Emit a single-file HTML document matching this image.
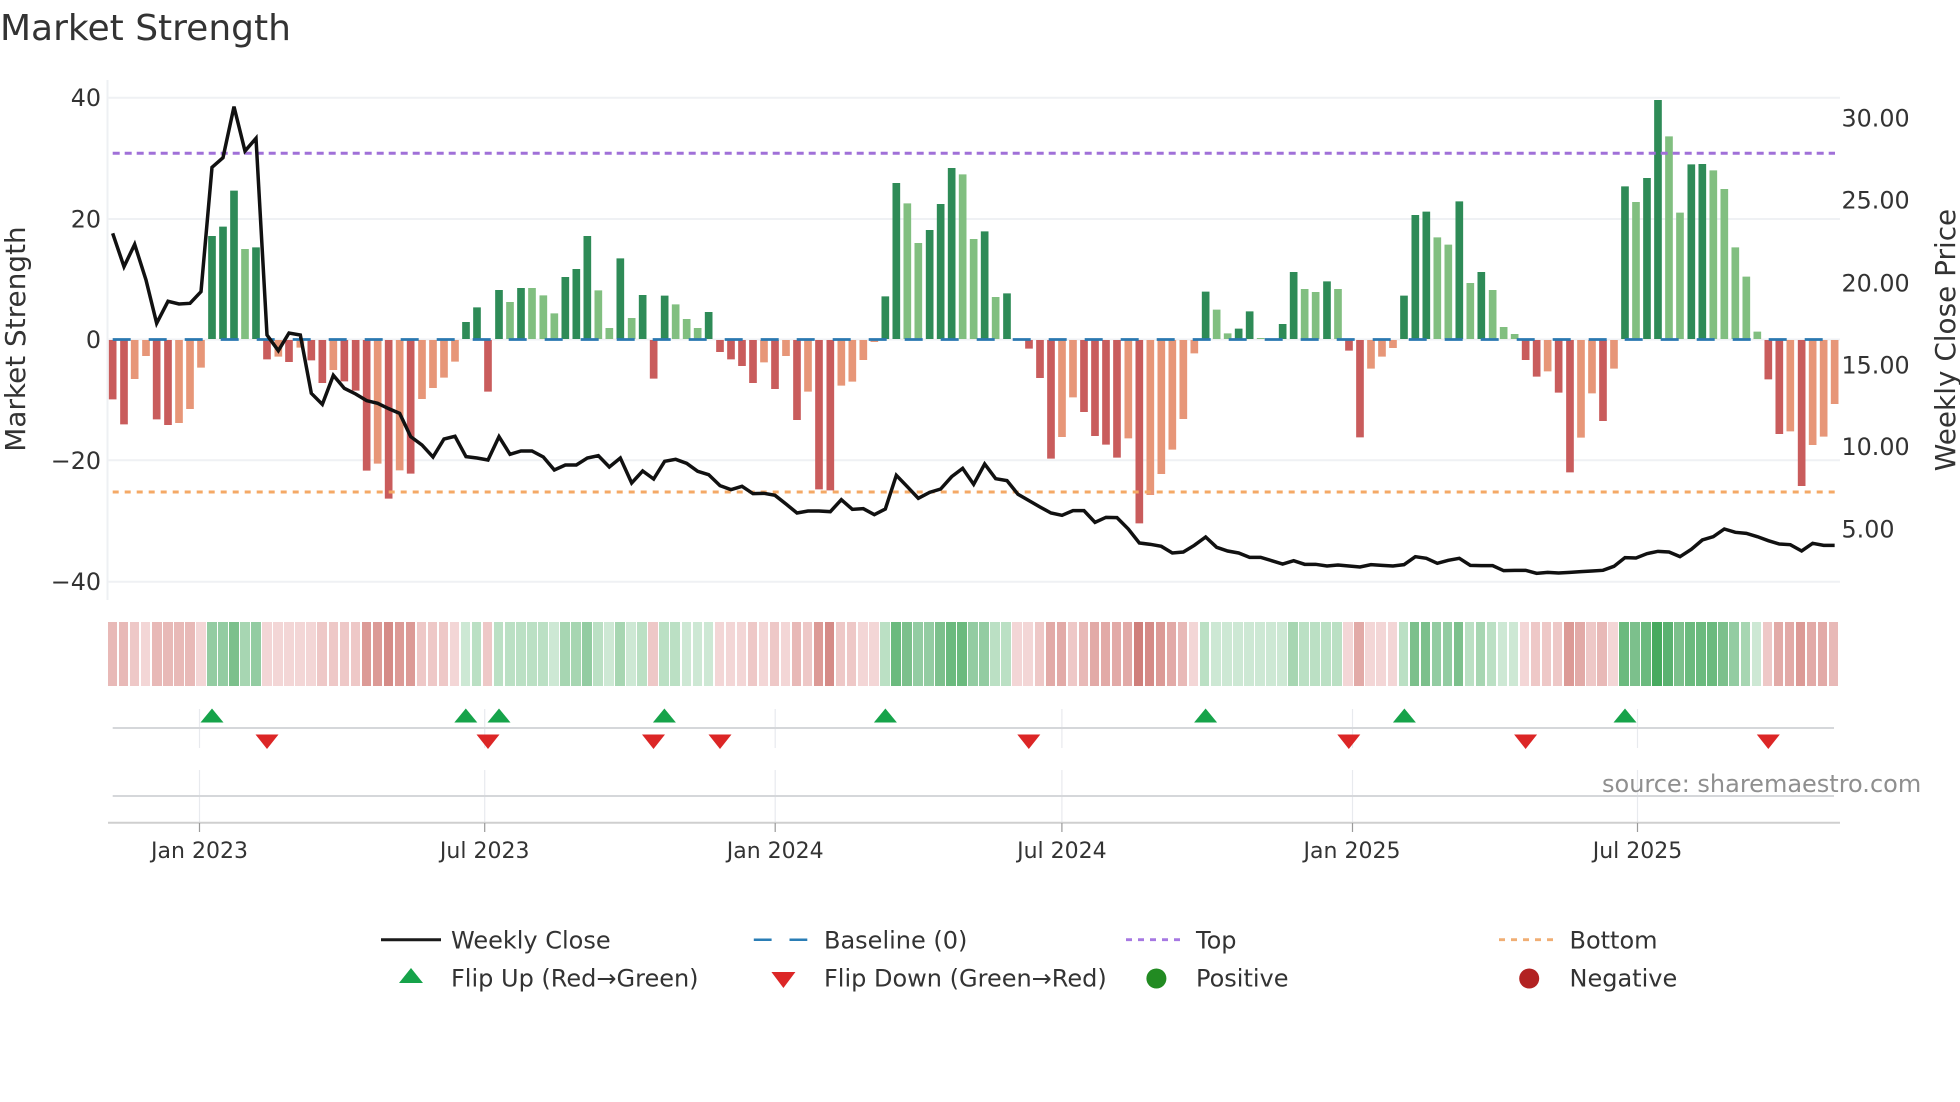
<!DOCTYPE html>
<html>
<head>
<meta charset="utf-8">
<title>Market Strength</title>
<style>
html,body{margin:0;padding:0;background:#fff;width:1960px;height:1102px;overflow:hidden}
svg{position:absolute;left:0;top:0}
text{font-family:"DejaVu Sans","Liberation Sans",sans-serif;fill:#333}
.t{font-size:23.8px}
.x{font-size:22px;text-anchor:middle}
.l{font-size:24px}
#s{position:absolute;left:107.9px;top:622px;height:64px;width:1736px;display:flex}
#s i{display:block;flex:none;width:9.5px;height:64px;margin-right:1.54px}
.r0{background:#f3d6d6}.r1{background:#eec8c7}.r2{background:#e8b9b7}.r3{background:#e2aaa7}.r4{background:#dc9a96}.r5{background:#d58b87}.r6{background:#cf7f7b}
.g0{background:#cde8d4}.g1{background:#bbe0c4}.g2{background:#a7d6b2}.g3{background:#93cca2}.g4{background:#7cc08c}.g5{background:#6bba7e}.g6{background:#5bb271}.g7{background:#47aa5f}
</style>
</head>
<body>
<svg width="1960" height="1102" viewBox="0 0 1960 1102" xmlns="http://www.w3.org/2000/svg">
<text x="0" y="40" style="font-size:36px">Market Strength</text>
<path d="M107.5 80V600" stroke="#eef0f3" stroke-width="2" fill="none"/>
<path d="M108 97.7H1840M108 219H1840M108 339.5H1840M108 460.3H1840M108 581.7H1840" stroke="#eff1f4" stroke-width="2" fill="none"/>
<g transform="translate(0,60) scale(0.33333)" fill="none" stroke-width="23">
<path stroke="#2e8b57" d="M636 837V528M669 837V500M702 837V392M768 837V562M1398 837V786M1431 837V742M1497 837V690M1563 837V684M1696 837V651M1729 837V627M1762 837V528M1861 837V595M1928 837V705M1994 837V707M2126 837V756M2656 837V709M2689 837V369M2789 837V510M2822 837V432M2855 837V324M2954 837V514M3021 837V700M3617 837V695M3716 837V806M3749 837V754M3848 837V792M3881 837V636M3981 837V664M4212 837V707M4246 837V465M4279 837V455M4378 837V424M4444 837V636M4875 837V379M4941 837V354M4974 837V120M5074 837V313M5107 837V312"/>
<path stroke="#81bf80" d="M735 837V567M1530 837V726M1596 837V684M1630 837V706M1663 837V760M1795 837V691M1828 837V804M1895 837V774M2027 837V733M2060 837V777M2093 837V804M2722 837V430M2755 837V549M2888 837V343M2921 837V537M2987 837V711M3650 837V749M3683 837V820M3782 837V834M3914 837V687M3947 837V696M4014 837V687M4312 837V532M4345 837V554M4411 837V669M4478 837V690M4511 837V801M4544 837V822M4908 837V426M5007 837V229M5040 837V458M5140 837V331M5173 837V387M5206 837V562M5239 837V650M5272 837V815"/>
<path stroke="#c95c5c" d="M338 840V1018M372 840V1093M470 840V1078M504 840V1095M801 840V898M867 840V906M934 840V901M967 840V969M1033 840V964M1067 840V992M1100 840V1232M1166 840V1316M1232 840V1241M1464 840V995M1961 840V956M2160 840V876M2193 840V898M2226 840V918M2259 840V969M2325 840V987M2391 840V1080M2457 840V1288M2491 840V1291M3087 840V866M3120 840V954M3153 840V1196M3252 840V1056M3285 840V1128M3318 840V1154M3351 840V1193M3418 840V1390M4047 840V872M4080 840V1132M4577 840V900M4610 840V950M4676 840V998M4710 840V1237M4809 840V1083M5305 840V958M5338 840V1122M5405 840V1278"/>
<path stroke="#e79678" d="M404 840V957M438 840V888M537 840V1089M570 840V1047M603 840V923M835 840V890M901 840V863M1000 840V930M1133 840V1211M1199 840V1231M1266 840V1017M1299 840V984M1332 840V953M1365 840V905M2292 840V907M2358 840V888M2424 840V995M2524 840V977M2557 840V965M2590 840V900M2623 840V846M3186 840V1131M3219 840V1012M3385 840V1135M3451 840V1305M3484 840V1242M3517 840V1169M3550 840V1077M3583 840V880M4113 840V926M4146 840V890M4179 840V864M4643 840V934M4743 840V1133M4776 840V1000M4842 840V926M5371 840V1114M5438 840V1155M5471 840V1130M5504 840V1032"/>
</g>
<path d="M112.7 339.5H1835" stroke="#2a78b0" stroke-width="2.8" stroke-dasharray="18 18" fill="none"/>
<path d="M112.7 153.3H1835" stroke="#a070d8" stroke-width="3" stroke-dasharray="7 5" fill="none"/>
<path d="M112.7 492H1835" stroke="#f4a966" stroke-width="3" stroke-dasharray="6 6" fill="none"/>
<g transform="translate(0,60) scale(0.33333)">
<polyline fill="none" stroke="#111" stroke-width="10.5" stroke-linejoin="miter" points="338,520 372,620 404,553 438,660 470,790 504,724 537,732 570,730 603,695 636,322 669,293 702,140 735,273 768,235 801,825 835,872 867,819 901,825 934,1000 967,1033 1000,946 1033,985 1067,1002 1100,1022 1133,1030 1166,1046 1199,1060 1232,1130 1266,1155 1299,1191 1332,1137 1365,1129 1398,1190 1431,1194 1464,1200 1497,1130 1530,1183 1563,1173 1596,1173 1630,1191 1663,1230 1696,1215 1729,1215 1762,1194 1795,1187 1828,1221 1861,1194 1895,1269 1928,1233 1961,1257 1994,1204 2027,1198 2060,1210 2093,1234 2126,1244 2160,1277 2193,1289 2226,1279 2259,1301 2292,1300 2325,1306 2358,1332 2391,1359 2424,1353 2457,1353 2491,1355 2524,1319 2557,1348 2590,1346 2623,1364 2656,1347 2689,1246 2722,1280 2755,1315 2789,1297 2822,1287 2855,1250 2888,1225 2921,1273 2954,1212 2987,1256 3021,1262 3054,1303 3087,1322 3120,1341 3153,1359 3186,1366 3219,1352 3252,1352 3285,1387 3318,1372 3351,1373 3385,1407 3418,1449 3451,1453 3484,1459 3517,1479 3550,1476 3583,1456 3617,1431 3650,1462 3683,1473 3716,1479 3749,1492 3782,1492 3815,1502 3848,1512 3881,1502 3914,1513 3947,1513 3981,1518 4014,1515 4047,1518 4080,1521 4113,1514 4146,1516 4179,1518 4212,1514 4246,1490 4279,1495 4312,1510 4345,1501 4378,1495 4411,1516 4444,1517 4478,1517 4511,1532 4544,1531 4577,1531 4610,1540 4643,1537 4676,1539 4710,1537 4743,1535 4776,1533 4809,1531 4842,1519 4875,1493 4908,1494 4941,1481 4974,1474 5007,1476 5040,1490 5074,1468 5107,1440 5140,1430 5173,1407 5206,1417 5239,1420 5272,1430 5305,1442 5338,1452 5371,1454 5405,1473 5438,1450 5471,1456 5504,1456"/>
</g>
<g text-anchor="end">
<text class="t" x="101" y="106">40</text>
<text class="t" x="101" y="227.5">20</text>
<text class="t" x="101" y="348">0</text>
<text class="t" x="101" y="469">−20</text>
<text class="t" x="101" y="590">−40</text>
</g>
<text class="t" x="1841.5" y="126.7">30.00</text>
<text class="t" x="1841.5" y="208.7">25.00</text>
<text class="t" x="1841.5" y="291.7">20.00</text>
<text class="t" x="1841.5" y="373.4">15.00</text>
<text class="t" x="1841.5" y="455.1">10.00</text>
<text class="t" x="1841.5" y="537.4">5.00</text>
<text transform="translate(25,339) rotate(-90)" text-anchor="middle" style="font-size:27.9px">Market Strength</text>
<text transform="translate(1955,340) rotate(-90)" text-anchor="middle" style="font-size:27.9px">Weekly Close Price</text>

<path d="M199.5 709V748M484.7 709V748M775.2 709V748M1061.9 709V748M1352.5 709V748M1637.5 709V748M199.5 770V822M484.7 770V822M775.2 770V822M1061.9 770V822M1352.5 770V822M1637.5 770V822" stroke="#e8eaee" stroke-width="1.2" fill="none"/>
<path d="M112.7 728H1834M112.7 796H1834" stroke="#d5d7da" stroke-width="2" fill="none"/>
<path d="M108 822.7H1840" stroke="#cfcfcf" stroke-width="2" fill="none"/>
<path d="M199.5 823V832M484.7 823V832M775.2 823V832M1061.9 823V832M1352.5 823V832M1637.5 823V832" stroke="#9a9a9a" stroke-width="1.2" fill="none"/>
<g fill="#16a34a">
<path d="M212 708.5l11.5 14h-23z"/>
<path d="M465.8 708.5l11.5 14h-23z"/>
<path d="M499 708.5l11.5 14h-23z"/>
<path d="M664.4 708.5l11.5 14h-23z"/>
<path d="M885.4 708.5l11.5 14h-23z"/>
<path d="M1205.6 708.5l11.5 14h-23z"/>
<path d="M1404.4 708.5l11.5 14h-23z"/>
<path d="M1625 708.5l11.5 14h-23z"/>
</g>
<g fill="#dc2626">
<path d="M267 749l11.5-14.500h-23z"/>
<path d="M488 749l11.5-14.500h-23z"/>
<path d="M653.500 749l11.5-14.500h-23z"/>
<path d="M720 749l11.5-14.500h-23z"/>
<path d="M1028.800 749l11.5-14.500h-23z"/>
<path d="M1348.800 749l11.5-14.500h-23z"/>
<path d="M1525.600 749l11.5-14.500h-23z"/>
<path d="M1768.300 749l11.5-14.500h-23z"/>
</g>
<text class="x" x="199.5" y="858">Jan 2023</text>
<text class="x" x="484.7" y="858">Jul 2023</text>
<text class="x" x="775.2" y="858">Jan 2024</text>
<text class="x" x="1061.900" y="858">Jul 2024</text>
<text class="x" x="1352" y="858">Jan 2025</text>
<text class="x" x="1637.500" y="858">Jul 2025</text>
<text x="1602" y="792" style="font-size:24px;fill:#8f8f8f">source: sharemaestro.com</text>

<path d="M381 939.7H441" stroke="#1a1a1a" stroke-width="3" fill="none"/>
<text class="l" x="451" y="948.500">Weekly Close</text>
<path d="M753.800 939.7H771.600M789.500 939.7H807.300" stroke="#2a7db5" stroke-width="2.500" fill="none"/>
<text class="l" x="824" y="948.500">Baseline (0)</text>
<path d="M1126 939.7H1181" stroke="#a678e2" stroke-width="2.800" stroke-dasharray="6 6" fill="none"/>
<text class="l" x="1196" y="948.500">Top</text>
<path d="M1499 939.7H1554" stroke="#f0ae74" stroke-width="2.800" stroke-dasharray="6 6" fill="none"/>
<text class="l" x="1569.500" y="948.500">Bottom</text>
<path d="M411 968l12 15h-24z" fill="#16a34a"/>
<text class="l" x="451" y="986.500">Flip Up (Red→Green)</text>
<path d="M783.400 988l12-16h-24z" fill="#dc2626"/>
<text class="l" x="824" y="986.500">Flip Down (Green→Red)</text>
<circle cx="1156.400" cy="978.500" r="10" fill="#228b22"/>
<text class="l" x="1196" y="986.500">Positive</text>
<circle cx="1529.200" cy="978.500" r="10" fill="#b22222"/>
<text class="l" x="1569.500" y="986.500">Negative</text>
</svg>
<div id="s"><i class="r2"></i><i class="r2"></i><i class="r1"></i><i class="r0"></i><i class="r2"></i><i class="r2"></i><i class="r2"></i><i class="r2"></i><i class="r0"></i><i class="g3"></i><i class="g3"></i><i class="g4"></i><i class="g2"></i><i class="g3"></i><i class="r0"></i><i class="r0"></i><i class="r0"></i><i class="r0"></i><i class="r0"></i><i class="r1"></i><i class="r1"></i><i class="r1"></i><i class="r1"></i><i class="r4"></i><i class="r4"></i><i class="r5"></i><i class="r4"></i><i class="r4"></i><i class="r1"></i><i class="r1"></i><i class="r1"></i><i class="r0"></i><i class="g0"></i><i class="g1"></i><i class="r1"></i><i class="g1"></i><i class="g1"></i><i class="g1"></i><i class="g1"></i><i class="g1"></i><i class="g0"></i><i class="g2"></i><i class="g2"></i><i class="g3"></i><i class="g1"></i><i class="g0"></i><i class="g2"></i><i class="g0"></i><i class="g1"></i><i class="r1"></i><i class="g1"></i><i class="g1"></i><i class="g0"></i><i class="g0"></i><i class="g0"></i><i class="r0"></i><i class="r0"></i><i class="r0"></i><i class="r1"></i><i class="r0"></i><i class="r1"></i><i class="r0"></i><i class="r2"></i><i class="r1"></i><i class="r4"></i><i class="r5"></i><i class="r1"></i><i class="r1"></i><i class="r0"></i><i class="r0"></i><i class="g1"></i><i class="g5"></i><i class="g4"></i><i class="g3"></i><i class="g3"></i><i class="g4"></i><i class="g5"></i><i class="g5"></i><i class="g3"></i><i class="g3"></i><i class="g1"></i><i class="g1"></i><i class="r0"></i><i class="r0"></i><i class="r1"></i><i class="r3"></i><i class="r3"></i><i class="r1"></i><i class="r2"></i><i class="r3"></i><i class="r3"></i><i class="r3"></i><i class="r3"></i><i class="r6"></i><i class="r5"></i><i class="r4"></i><i class="r3"></i><i class="r2"></i><i class="r0"></i><i class="g1"></i><i class="g0"></i><i class="g0"></i><i class="g0"></i><i class="g0"></i><i class="g0"></i><i class="g0"></i><i class="g0"></i><i class="g2"></i><i class="g1"></i><i class="g1"></i><i class="g1"></i><i class="g1"></i><i class="r0"></i><i class="r3"></i><i class="r0"></i><i class="r0"></i><i class="r0"></i><i class="g1"></i><i class="g4"></i><i class="g4"></i><i class="g3"></i><i class="g3"></i><i class="g4"></i><i class="g1"></i><i class="g2"></i><i class="g1"></i><i class="g0"></i><i class="g0"></i><i class="r0"></i><i class="r1"></i><i class="r1"></i><i class="r1"></i><i class="r4"></i><i class="r3"></i><i class="r1"></i><i class="r2"></i><i class="r0"></i><i class="g5"></i><i class="g4"></i><i class="g5"></i><i class="g7"></i><i class="g6"></i><i class="g4"></i><i class="g5"></i><i class="g5"></i><i class="g5"></i><i class="g4"></i><i class="g3"></i><i class="g2"></i><i class="g0"></i><i class="r1"></i><i class="r3"></i><i class="r3"></i><i class="r4"></i><i class="r3"></i><i class="r3"></i><i class="r2"></i></div>
</body>
</html>
